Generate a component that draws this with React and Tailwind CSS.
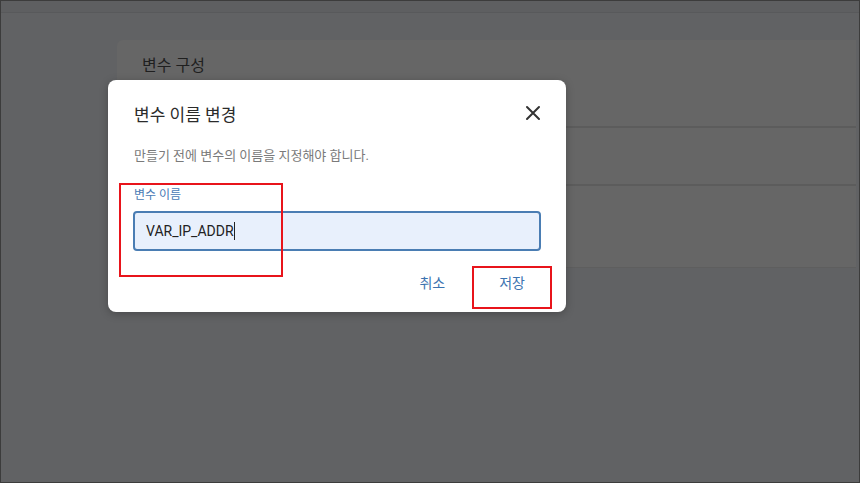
import React from "react";

export default function App() {
  const font = { fontFamily: 'Roboto, "Noto Sans CJK KR", sans-serif' };
  return (
    <div className="relative w-[860px] h-[483px] overflow-hidden bg-[#616264] border border-[#3c3c3c]" style={font}>
      <div className="h-[12px] bg-[#5e5f61] border-b border-[#58595b]" />
      <div className="ml-[116px] mr-[3px] mt-[27px] h-[228px] bg-[#666666] rounded-tl-[6px] flex flex-col">
        <div className="h-[88px] pt-[14px] pl-[25px] text-[16px] text-[#1f1f1f] border-b-2 border-[#5c5c5c]">변수 구성</div>
        <div className="h-[58px] border-b-2 border-[#5c5c5c]" />
        <div className="flex-1 border-b border-[#5e5e5e]" />
      </div>

      <div className="absolute left-[107px] top-[79px] w-[458px] h-[232px] bg-white rounded-[8px] shadow-[0_2px_8px_rgba(0,0,0,0.25)]">
        <div className="flex items-center justify-between pl-[26px] pr-[24px] pt-[22px]">
          <div className="text-[17px] text-[#2b2b2b] leading-[26px]">변수 이름 변경</div>
          <svg width="18" height="18" viewBox="0 0 18 18" className="mt-[-4px]">
            <path d="M3 3 L15 15 M15 3 L3 15" stroke="#333" strokeWidth="2" strokeLinecap="round" />
          </svg>
        </div>
        <div className="pl-[26px] mt-[19px] text-[13px] text-[#7a7a7a] leading-[18px]">만들기 전에 변수의 이름을 지정해야 합니다.</div>
        <div className="pl-[26px] mt-[22px] text-[12px] text-[#4a7ab5] leading-[16px]">변수 이름</div>
        <div className="ml-[25px] mr-[25px] mt-[8px] h-[40px] rounded-[4px] border-2 border-[#4a7db3] bg-[#e8f0fc] flex items-center pl-[11px] text-[14px] text-[#222]">
          VAR_IP_ADDR<span className="inline-block w-[1px] h-[18px] bg-[#222]" />
        </div>
        <div className="flex justify-end items-center mt-[22px] pr-[41px] gap-[54px] text-[14px] text-[#3c73b0]">
          <span>취소</span>
          <span>저장</span>
        </div>
        <div className="absolute left-[11px] top-[103px] w-[164px] h-[94px] border-2 border-[#e8141b]" />
        <div className="absolute left-[364px] top-[186px] w-[80px] h-[43px] border-2 border-[#e8141b]" />
      </div>
    </div>
  );
}
